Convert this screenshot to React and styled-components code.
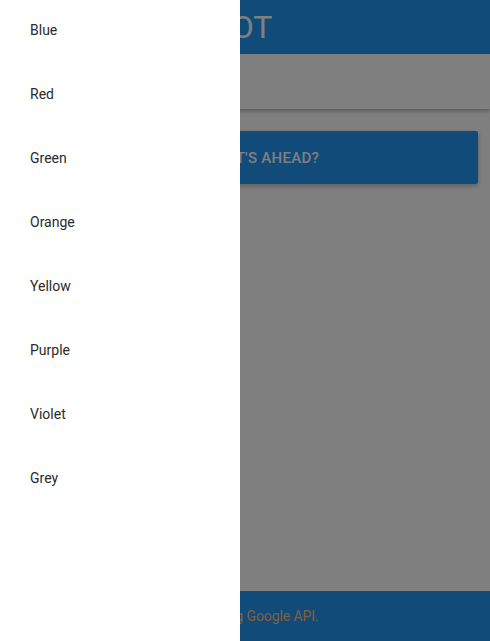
import React from 'react';
import styled, { createGlobalStyle } from 'styled-components';

const colors = ['Blue', 'Red', 'Green', 'Orange', 'Yellow', 'Purple', 'Violet', 'Grey'];

const App = () => {
  return (
    <>
      <GlobalStyle />
      <Page>
        <Header>
          <Title>COLORBOT</Title>
        </Header>
        <InputBar />
        <Content>
          <ActionButton type="button">See what's ahead?</ActionButton>
        </Content>
        <Footer>Made using Google API.</Footer>
      </Page>
      <Overlay />
      <Drawer>
        {colors.map((c) => (
          <DrawerItem key={c}>{c}</DrawerItem>
        ))}
      </Drawer>
    </>
  );
};

const GlobalStyle = createGlobalStyle`
  html, body {
    margin: 0;
    padding: 0;
    height: 100%;
  }
  body {
    font-family: Roboto, "Liberation Sans", sans-serif;
    background: #ffffff;
    overflow: hidden;
  }
  #root {
    height: 100%;
  }
`;

const Page = styled.div`
  display: flex;
  flex-direction: column;
  height: 100vh;
  background: #ffffff;
`;

const Header = styled.header`
  display: flex;
  align-items: center;
  height: 54px;
  padding-left: 111px;
  background: #2196f3;
`;

const Title = styled.h1`
  margin: 0;
  font-size: 32px;
  font-weight: 400;
  color: #ffffff;
`;

const InputBar = styled.div`
  height: 55px;
  background: #ffffff;
  box-shadow: 0 2px 4px rgba(0, 0, 0, 0.3);
`;

const Content = styled.main`
  flex: 1;
  padding: 22px 12px 0;
`;

const ActionButton = styled.button`
  width: 100%;
  height: 53px;
  border: none;
  border-radius: 2px;
  background: #2196f3;
  color: #ffffff;
  font-family: Roboto, "Liberation Sans", sans-serif;
  font-size: 15px;
  font-weight: 500;
  letter-spacing: 0.3px;
  text-transform: uppercase;
  box-shadow: 0 2px 5px rgba(0, 0, 0, 0.26);
  cursor: pointer;
`;

const Footer = styled.footer`
  display: flex;
  align-items: center;
  justify-content: center;
  height: 50px;
  background: #2196f3;
  color: #ffc078;
  font-size: 14px;
  letter-spacing: -0.1px;
`;

const Overlay = styled.div`
  position: fixed;
  inset: 0;
  background: rgba(0, 0, 0, 0.5);
`;

const Drawer = styled.nav`
  position: fixed;
  top: 0;
  left: 0;
  bottom: 0;
  width: 240px;
  background: #ffffff;
  display: flex;
  flex-direction: column;
`;

const DrawerItem = styled.div`
  height: 64px;
  box-sizing: border-box;
  padding: 20px 30px 0;
  line-height: 20px;
  font-size: 14px;
  color: #2b2b2b;
`;

export default App;
